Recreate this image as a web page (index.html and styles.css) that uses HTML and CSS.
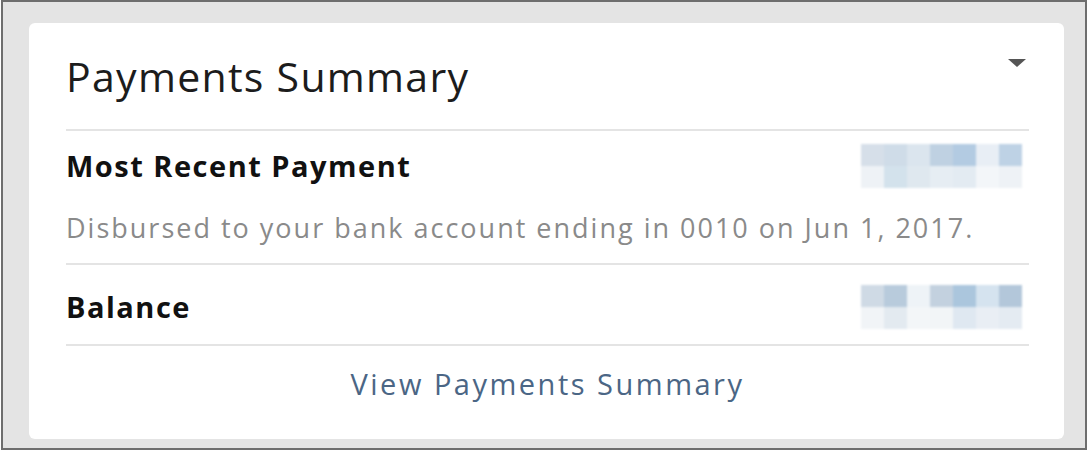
FILE: index.html
```html
<!DOCTYPE html>
<html lang="en">
<head>
<meta charset="utf-8">
<title>Payments Summary</title>
<link rel="stylesheet" href="styles.css">
</head>
<body>
<div class="frame">
  <section class="card">
    <header class="card-head">
      <h1 class="title">Payments Summary</h1>
      <span class="caret" aria-hidden="true"></span>
    </header>
    <div class="row row-recent">
      <div class="row-line">
        <span class="label">Most Recent Payment</span>
        <div class="mosaic">
          <i style="background:#d6dfe9"></i><i style="background:#cfdce8"></i><i style="background:#dbe5ee"></i><i style="background:#bfd1e2"></i><i style="background:#b3cbe2"></i><i style="background:#e8eef5"></i><i style="background:#bed2e5"></i>
          <i style="background:#eef2f6"></i><i style="background:#d3e2ec"></i><i style="background:#dfe8ef"></i><i style="background:#e6edf3"></i><i style="background:#e3ebf2"></i><i style="background:#f3f6f9"></i><i style="background:#eef2f6"></i>
        </div>
      </div>
      <p class="desc">Disbursed to your bank account ending in 0010 on Jun 1, 2017.</p>
    </div>
    <div class="row row-balance">
      <div class="row-line">
        <span class="label">Balance</span>
        <div class="mosaic">
          <i style="background:#cfdae5"></i><i style="background:#b8cbdc"></i><i style="background:#eef3f7"></i><i style="background:#c3d1df"></i><i style="background:#abc6dd"></i><i style="background:#d5e3ef"></i><i style="background:#b3c7da"></i>
          <i style="background:#f1f4f7"></i><i style="background:#e3eaf0"></i><i style="background:#f3f6f8"></i><i style="background:#f2f5f7"></i><i style="background:#dfe8f1"></i><i style="background:#e9eef4"></i><i style="background:#e4ebf2"></i>
        </div>
      </div>
    </div>
    <footer class="card-foot">
      <a class="link" href="#">View Payments Summary</a>
    </footer>
  </section>
</div>
</body>
</html>
```
FILE: styles.css
```css
* { box-sizing: border-box; }
html, body { margin: 0; padding: 0; }
body {
  width: 1088px;
  height: 452px;
  background: #ffffff;
  font-family: "Open Sans", "Noto Sans", "Liberation Sans", sans-serif;
  color: #111;
}
.frame {
  margin-left: 1px;
  width: 1086px;
  height: 450px;
  border: 2px solid #6e6e6e;
  background: #e4e4e4;
  padding: 21px 21px 9px 26px;
}
.card {
  height: 100%;
  background: #fff;
  border-radius: 6px;
  padding: 0 35px 0 37px;
  display: flex;
  flex-direction: column;
}
.card-head {
  height: 108px;
  border-bottom: 2px solid #e4e4e4;
  display: flex;
  justify-content: space-between;
  align-items: flex-start;
  padding-top: 29px;
}
.title {
  margin: 0;
  font-size: 41px;
  line-height: 48px;
  font-weight: 400;
  letter-spacing: 1.3px;
  color: #1c1c1c;
}
.caret {
  margin-top: 7px;
  margin-right: 3px;
  width: 0;
  height: 0;
  border-left: 9px solid transparent;
  border-right: 9px solid transparent;
  border-top: 8px solid #555;
}
.row {
  border-bottom: 2px solid #e4e4e4;
}
.row-recent {
  height: 134px;
  padding-top: 13px;
}
.row-balance {
  height: 81px;
  padding-top: 20px;
}
.row-line {
  display: flex;
  justify-content: space-between;
  align-items: center;
}
.label {
  font-size: 29px;
  line-height: 32px;
  font-weight: 700;
  letter-spacing: 1.5px;
  color: #111;
}
.mosaic {
  display: grid;
  grid-template-columns: repeat(7, 23px);
  grid-auto-rows: 22px;
  margin-right: 7px;
  filter: blur(1px);
}
.mosaic i { display: block; }
.desc {
  margin: 25px 0 0;
  font-size: 27px;
  line-height: 30px;
  letter-spacing: 2px;
  color: #8a8a8a;
}
.card-foot {
  flex: 1;
  display: flex;
  justify-content: center;
  align-items: flex-start;
  padding-top: 22px;
}
.link {
  font-size: 29px;
  line-height: 32px;
  letter-spacing: 2.5px;
  color: #4b6685;
  text-decoration: none;
}
```
